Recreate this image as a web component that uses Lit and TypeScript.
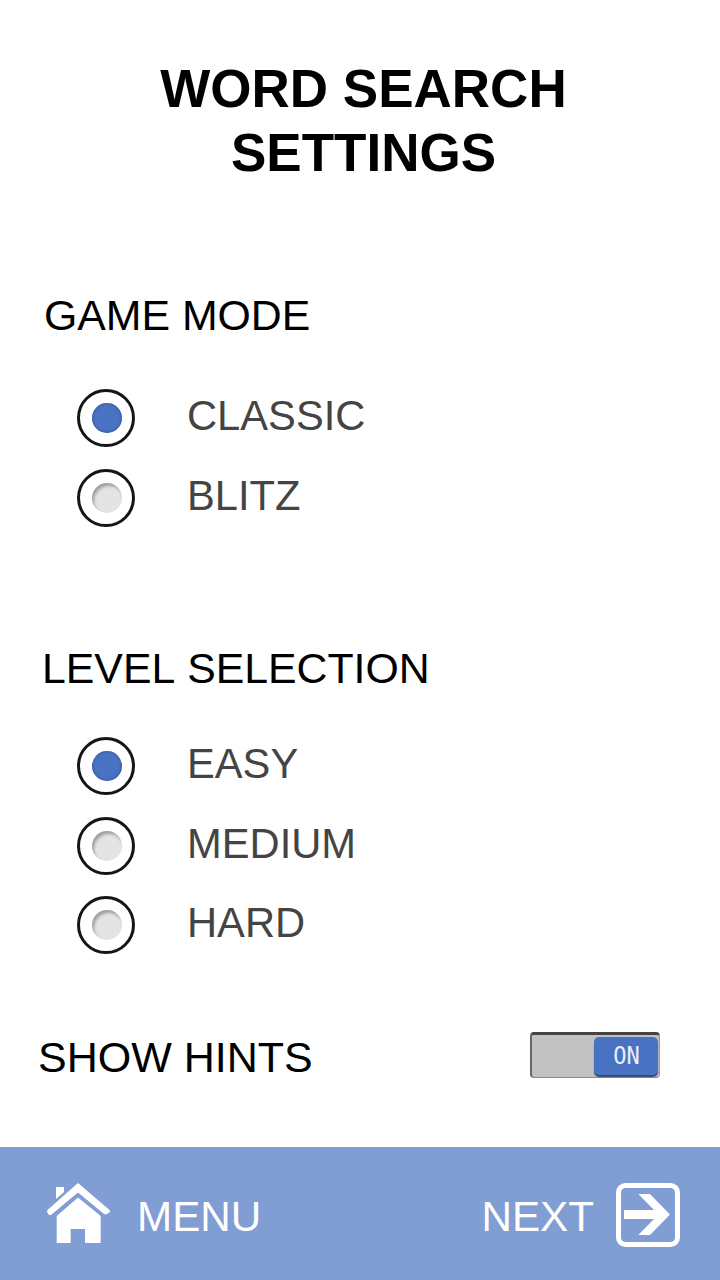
import { LitElement, html, css } from 'lit'
import { customElement, state } from 'lit/decorators.js'

const MODES = ['CLASSIC', 'BLITZ']
const LEVELS = ['EASY', 'MEDIUM', 'HARD']

@customElement('app-root')
export class AppRoot extends LitElement {
    static styles = css`
        :host {
            display: flex;
            flex-direction: column;
            width: 720px;
            height: 1280px;
            overflow: hidden;
            background: #fff;
            font-family: 'Liberation Sans', Arial, sans-serif;
        }

        .title {
            margin: 57px 0 0 7px;
            font-size: 53px;
            line-height: 64px;
            font-weight: 700;
            text-align: center;
            color: #000;
        }

        .label {
            font-size: 42.8px;
            line-height: 50px;
            color: #000;
        }

        .mode-label {
            margin: 105px 0 0 44px;
        }

        .level-label {
            margin: 115px 0 0 42px;
            font-kerning: none;
        }

        .options {
            display: flex;
            flex-direction: column;
            gap: 20px;
            padding-left: 77px;
        }

        .mode-options {
            margin-top: 48px;
        }

        .level-options {
            margin-top: 43px;
        }

        .level-options .option:last-child {
            margin-top: -1px;
        }

        .option {
            display: flex;
            align-items: center;
            height: 60px;
            font-size: 41.7px;
            color: #444;
        }

        .option span {
            margin: -5px 0 0 52px;
        }

        .radio {
            box-sizing: border-box;
            display: flex;
            align-items: center;
            justify-content: center;
            flex: none;
            width: 58px;
            height: 58px;
            padding-left: 1px;
            border: 3px solid #151515;
            border-radius: 50%;
            background: #fff;
        }

        .dot {
            width: 30px;
            height: 30px;
            border-radius: 50%;
            background: #e4e4e4;
            box-shadow: inset 2px 3px 3px #a0a0a0;
        }

        .on .dot {
            background: #4a72c2;
            box-shadow: inset 0 0 3px #274a94;
        }

        .hints {
            display: flex;
            align-items: center;
            justify-content: space-between;
            margin-top: 73px;
            padding: 0 60px 0 38px;
        }

        .hints .label {
            margin-top: 4px;
            font-size: 43px;
        }

        .toggle {
            box-sizing: border-box;
            display: flex;
            justify-content: flex-end;
            align-items: center;
            width: 130px;
            height: 46px;
            padding: 0 1px 0 0;
            border-radius: 4px;
            background: #c2c2c2;
            border-top: 3px solid #444;
            border-left: 2px solid #666;
            border-bottom: 1px solid #888;
            border-right: 1px solid #999;
        }

        .knob {
            display: flex;
            align-items: center;
            justify-content: center;
            width: 64px;
            height: 38px;
            border-radius: 5px;
            background: #4a72c2;
            box-shadow: 0 2px 1px #33496f;
            color: #e8eefa;
            font-family: 'DejaVu Sans Mono', monospace;
            font-size: 24px;
        }

        .knob span {
            display: inline-block;
            transform: scaleX(0.92);
        }

        .footer {
            display: flex;
            align-items: center;
            justify-content: space-between;
            margin-top: auto;
            height: 133px;
            padding: 0 40px 0 46px;
            background: #809dd4;
            color: #fff;
            font-size: 42.2px;
        }

        .side {
            display: flex;
            align-items: center;
        }

        .side span {
            margin-top: 6px;
        }

        .home {
            width: 64px;
            height: 62px;
            margin: -1px 27px 0 0;
        }

        .next {
            width: 64px;
            height: 64px;
            margin: 2px 0 0 22px;
        }
    `

    @state() mode = 'CLASSIC'
    @state() level = 'EASY'

    renderOption(name: string, selected: string, pick: (v: string) => void) {
        return html`
            <div class="option ${name === selected ? 'on' : ''}" @click=${() => pick(name)}>
                <div class="radio"><div class="dot"></div></div>
                <span>${name}</span>
            </div>
        `
    }

    render() {
        return html`
            <div class="title">WORD SEARCH<br />SETTINGS</div>

            <div class="label mode-label">GAME MODE</div>
            <div class="options mode-options">
                ${MODES.map((m) => this.renderOption(m, this.mode, (v) => (this.mode = v)))}
            </div>

            <div class="label level-label">LEVEL SELECTION</div>
            <div class="options level-options">
                ${LEVELS.map((l) => this.renderOption(l, this.level, (v) => (this.level = v)))}
            </div>

            <div class="hints">
                <div class="label">SHOW HINTS</div>
                <div class="toggle"><div class="knob"><span>ON</span></div></div>
            </div>

            <div class="footer">
                <div class="side">
                    <svg class="home" viewBox="0 0 64 62" fill="#fff">
                        <path d="M10 5H18V10L10 17z" />
                        <path d="M32 1L63.500 28 64 30 60 32.500 58 32 32 10.500 5 33 3 33 1 30 1.500 28z" />
                        <path d="M32 15.500L54.700 34V61H39V47H24.700V61H10.700V34z" />
                    </svg>
                    <span>MENU</span>
                </div>
                <div class="side">
                    <span>NEXT</span>
                    <svg class="next" viewBox="0 0 64 64">
                        <rect x="2.500" y="2.500" width="59" height="59" rx="7" fill="none" stroke="#fff" stroke-width="5" />
                        <path d="M8 27H38L22.300 11H34L54 31.500 34 52H22.300L38 36H8z" fill="#fff" />
                    </svg>
                </div>
            </div>
        `
    }
}
